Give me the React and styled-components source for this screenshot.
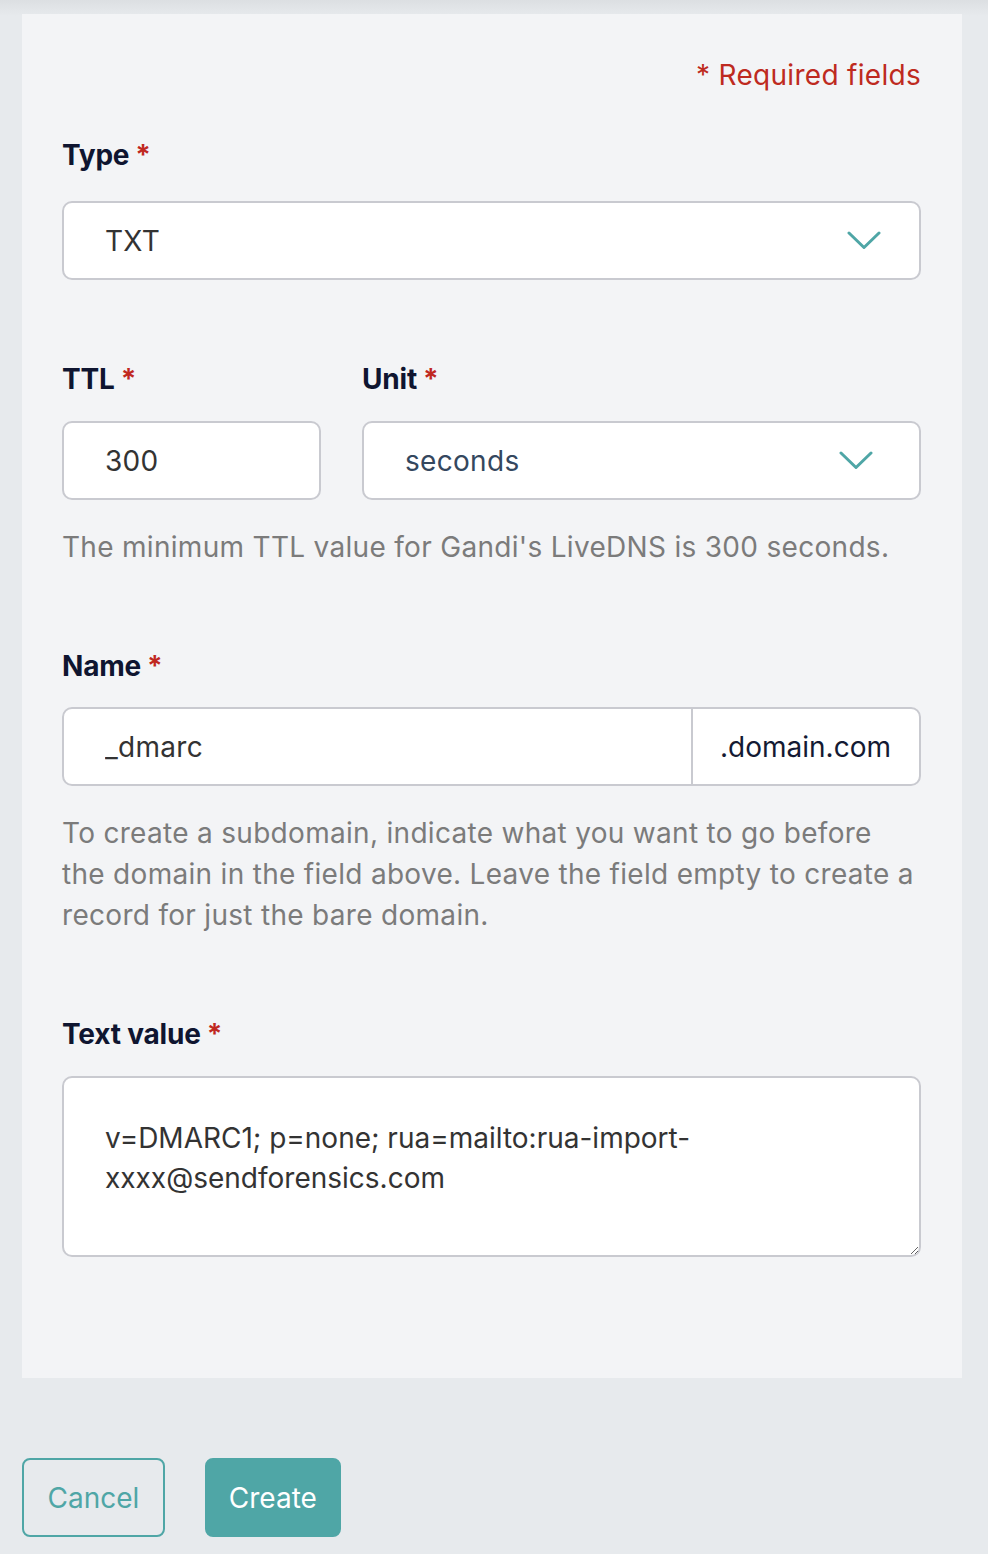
import styled, { createGlobalStyle } from "styled-components";

const GlobalStyle = createGlobalStyle`
  html, body {
    margin: 0;
    padding: 0;
  }
  body {
    background: linear-gradient(#dcdfe2 0px, #e7eaed 16px, #e7eaed 100%);
    font-family: Inter, "Liberation Sans", sans-serif;
    -webkit-font-smoothing: antialiased;
  }
`;

function Chevron() {
  return (
    <svg width="34" height="20" viewBox="0 0 34 20" fill="none">
      <path
        d="M2 2 L17 16.5 L32 2"
        stroke="#4fa6a6"
        strokeWidth="3"
        strokeLinecap="round"
        strokeLinejoin="round"
      />
    </svg>
  );
}

function Label({ children, top }) {
  return (
    <FieldLabel $top={top}>
      {children}
      <Star>*</Star>
    </FieldLabel>
  );
}

export default function App() {
  return (
    <>
      <GlobalStyle />
      <Page>
        <Panel>
          <Required>* Required fields</Required>

          <Label top={40}>Type</Label>
          <SelectBox $gap={26} $right={38}>
            <SelectValue>TXT</SelectValue>
            <Chevron />
          </SelectBox>

          <TtlRow>
            <TtlCol>
              <Label top={79}>TTL</Label>
              <TextInput type="text" value="300" readOnly />
            </TtlCol>
            <UnitCol>
              <Label top={79}>Unit</Label>
              <SelectBox $gap={22} $right={46}>
                <SelectValue $muted>seconds</SelectValue>
                <Chevron />
              </SelectBox>
            </UnitCol>
          </TtlRow>
          <Hint>The minimum TTL value for Gandi's LiveDNS is 300 seconds.</Hint>

          <Label top={78}>Name</Label>
          <Group>
            <GroupInput type="text" value="_dmarc" readOnly />
            <Suffix>.domain.com</Suffix>
          </Group>
          <Hint>
            To create a subdomain, indicate what you want to go before the
            domain in the field above. Leave the field empty to create a record
            for just the bare domain.
          </Hint>

          <Label top={78}>Text value</Label>
          <TextArea
            readOnly
            value="v=DMARC1; p=none; rua=mailto:rua-import-xxxx@sendforensics.com"
          />
        </Panel>

        <Actions>
          <Button $variant="outline" $pad={23.5}>
            Cancel
          </Button>
          <Button $pad={22}>Create</Button>
        </Actions>
      </Page>
    </>
  );
}

const Page = styled.div`
  width: 988px;
  min-height: 1554px;
  padding: 14px 26px 17px 22px;
  box-sizing: border-box;
`;

const Panel = styled.div`
  background: #f3f4f6;
  padding: 41px 41px 121px 40px;
  display: flex;
  flex-direction: column;
`;

const Required = styled.div`
  align-self: flex-end;
  color: #be2a20;
  font-size: 28px;
  line-height: 40px;
  letter-spacing: 0.3px;
`;

const FieldLabel = styled.div`
  margin-top: ${({ $top }) => $top}px;
  color: #0f1530;
  font-size: 28px;
  font-weight: 700;
  line-height: 40px;
  letter-spacing: -0.2px;
`;

const Star = styled.span`
  color: #c0281f;
  margin-left: 6px;
`;

const SelectBox = styled.div`
  margin-top: ${({ $gap }) => $gap}px;
  height: 79px;
  box-sizing: border-box;
  display: flex;
  align-items: center;
  justify-content: space-between;
  padding: 0 ${({ $right }) => $right}px 0 41px;
  background: #fff;
  border: 2px solid #c9cad0;
  border-radius: 10px;
`;

const SelectValue = styled.span`
  font-size: 28px;
  letter-spacing: 0.3px;
  color: ${({ $muted }) => ($muted ? "#34475e" : "#333")};
`;

const TtlRow = styled.div`
  display: flex;
  gap: 41px;
`;

const TtlCol = styled.div`
  width: 259px;
  display: flex;
  flex-direction: column;
`;

const UnitCol = styled.div`
  flex: 1;
  display: flex;
  flex-direction: column;
`;

const TextInput = styled.input`
  margin-top: 22px;
  height: 79px;
  box-sizing: border-box;
  width: 100%;
  padding: 0 41px;
  background: #fff;
  border: 2px solid #c9cad0;
  border-radius: 10px;
  font-family: inherit;
  font-size: 28px;
  letter-spacing: 0.3px;
  color: #333;
  outline: none;
`;

const Hint = styled.p`
  margin: 27px 0 0;
  color: #7b7b7b;
  font-size: 28px;
  line-height: 41px;
  letter-spacing: 0.3px;
`;

const Group = styled.div`
  margin-top: 21px;
  height: 79px;
  box-sizing: border-box;
  display: flex;
  background: #fff;
  border: 2px solid #c9cad0;
  border-radius: 10px;
  overflow: hidden;
`;

const GroupInput = styled.input`
  flex: 1;
  min-width: 0;
  border: none;
  padding: 0 41px;
  font-family: inherit;
  font-size: 28px;
  letter-spacing: 0.3px;
  color: #333;
  outline: none;
  background: transparent;
`;

const Suffix = styled.div`
  display: flex;
  align-items: center;
  padding: 0 28px 0 27px;
  border-left: 2px solid #c9cad0;
  color: #141a33;
  font-size: 28px;
`;

const TextArea = styled.textarea`
  margin-top: 22px;
  height: 181px;
  box-sizing: border-box;
  width: 100%;
  padding: 40px 41px;
  background: #fff;
  border: 2px solid #c9cad0;
  border-radius: 10px;
  font-family: inherit;
  font-size: 28px;
  line-height: 40px;
  color: #333;
  resize: vertical;
  outline: none;
`;

const Actions = styled.div`
  display: flex;
  gap: 40px;
  margin-top: 80px;
`;

const Button = styled.button`
  height: 79px;
  box-sizing: border-box;
  padding: 0 ${({ $pad }) => $pad}px;
  border-radius: 8px;
  border: 2px solid #4fa6a6;
  background: ${({ $variant }) => ($variant === "outline" ? "transparent" : "#4fa6a6")};
  color: ${({ $variant }) => ($variant === "outline" ? "#4fa6a6" : "#fff")};
  font-family: inherit;
  font-size: 28px;
  cursor: pointer;
`;
